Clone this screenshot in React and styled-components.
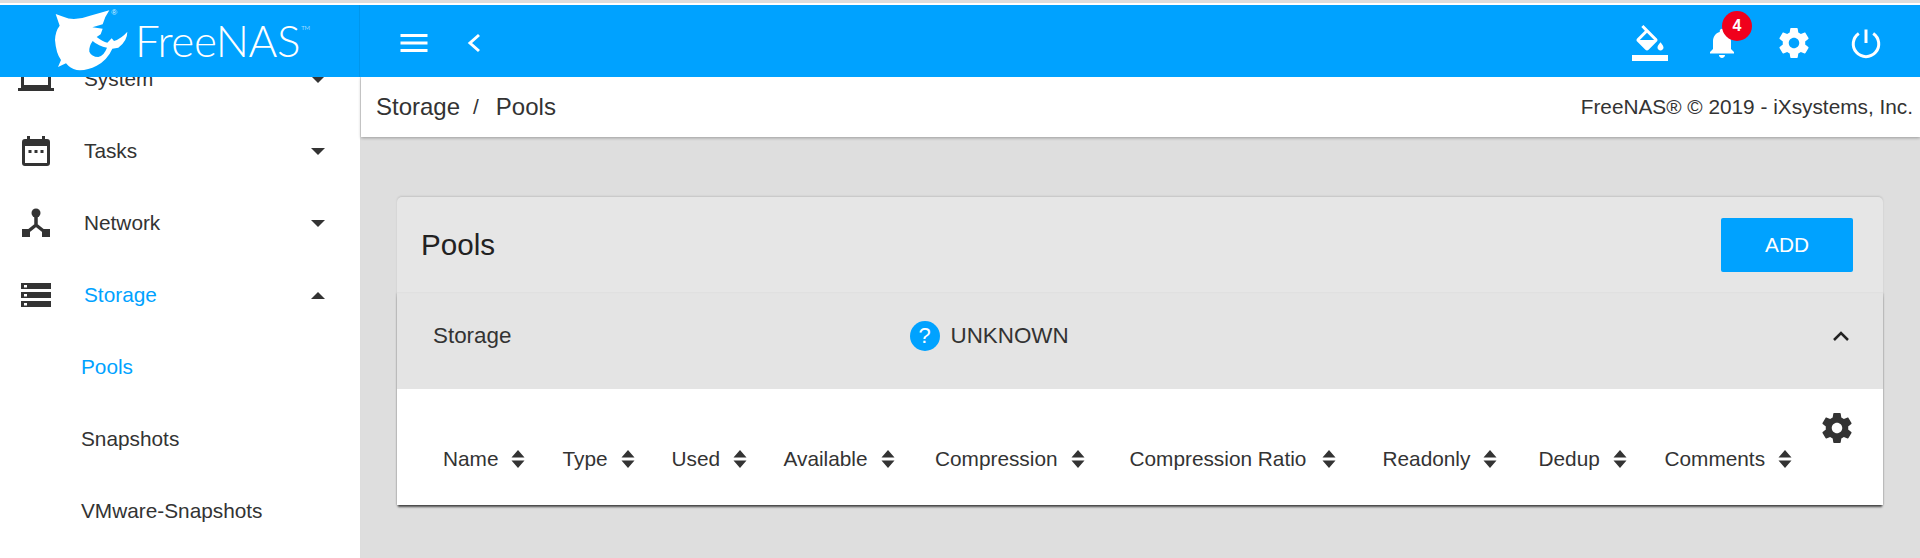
import React from "react";
import styled, { createGlobalStyle } from "styled-components";

const BLUE = "#00a2ff";
const INK = "#333333";

const GlobalStyle = createGlobalStyle`
  html, body {
    margin: 0;
    height: 100%;
    overflow: hidden;
    background: #ffffff;
    font-family: "Liberation Sans", Arial, sans-serif;
    color: ${INK};
  }
`;

const Page = styled.div`
  width: 1920px;
  height: 558px;
  display: flex;
  flex-direction: column;
  overflow: hidden;
`;

const BrowserEdge = styled.div`
  height: 3px;
  margin-bottom: 2px;
  background: #dddddd;
  flex: none;
`;

// Top bar
const TopBar = styled.header`
  height: 72px;
  flex: none;
  display: flex;
  align-items: stretch;
  background: ${BLUE};
  color: #fff;
  position: relative;
  z-index: 3;
`;

const Brand = styled.div`
  width: 360px;
  flex: none;
  display: flex;
  align-items: flex-start;
  padding-left: 50px;
  box-sizing: border-box;
  border-right: 1px solid #0096ec;
`;

const BrandName = styled.div`
  font-family: Lato, sans-serif;
  font-weight: 300;
  font-size: 44px;
  line-height: 50px;
  letter-spacing: -0.4px;
  margin: 10px 0 0 -5px;
  display: flex;
  align-items: flex-start;
`;

const Tm = styled.span`
  font-size: 6px;
  line-height: 10px;
  letter-spacing: 0;
  margin: 8px 0 0 1px;
`;

const BarActions = styled.div`
  flex: 1;
  display: flex;
  align-items: center;
  padding: 4px 36px 0 36px;
`;

const Spacer = styled.div`
  flex: 1;
`;

const BarIcon = styled.span`
  display: inline-flex;
  position: relative;
  width: ${(p) => p.$w}px;
  height: ${(p) => p.$h || p.$w}px;
  margin-left: ${(p) => p.$ml || 0}px;
  svg {
    display: block;
    width: 100%;
    height: 100%;
  }
`;

const Badge = styled.span`
  position: absolute;
  right: -12px;
  top: -14px;
  width: 30px;
  height: 30px;
  border-radius: 50%;
  background: #f0001c;
  color: #fff;
  font-size: 16px;
  font-weight: 700;
  display: flex;
  align-items: center;
  justify-content: center;
`;

// Sidebar + content
const Body = styled.div`
  flex: 1;
  display: flex;
  min-height: 0;
`;

const Sidebar = styled.nav`
  width: 361px;
  flex: none;
  box-sizing: border-box;
  overflow: hidden;
  background: #fff;
  border-right: 1px solid #dddddd;
`;

const NavList = styled.div`
  margin-top: -34px;
`;

const NavItem = styled.div`
  height: 72px;
  display: flex;
  align-items: center;
  font-size: 20.8px;
  color: ${(p) => (p.$active ? BLUE : INK)};
  padding-left: ${(p) => (p.$sub ? 81 : 18)}px;
`;

const NavIcon = styled.span`
  width: 36px;
  height: 36px;
  margin-right: 30px;
  flex: none;
  svg {
    display: block;
    width: 36px;
    height: 36px;
  }
`;

const NavLabel = styled.span`
  flex: 1;
`;

const Caret = styled.span`
  width: 0;
  height: 0;
  margin-right: 35px;
  border-left: 7px solid transparent;
  border-right: 7px solid transparent;
  border-top: ${(p) => (p.$up ? "0" : `7px solid ${INK}`)};
  border-bottom: ${(p) => (p.$up ? `7px solid ${INK}` : "0")};
`;

const Main = styled.main`
  flex: 1;
  min-width: 0;
  background: #dedede;
  display: flex;
  flex-direction: column;
`;

const Crumbs = styled.div`
  height: 60px;
  flex: none;
  box-sizing: border-box;
  padding: 0 7px 0 15px;
  display: flex;
  align-items: center;
  justify-content: space-between;
  background: #fff;
  box-shadow: 0 1px 3px rgba(0, 0, 0, 0.3);
  font-size: 24px;
  position: relative;
`;

const CrumbPath = styled.div`
  display: flex;
  align-items: center;
`;

const CrumbSep = styled.span`
  font-size: 20.8px;
  margin: 0 17px 0 13px;
`;

const Copyright = styled.div`
  font-size: 20.8px;
`;

const Content = styled.div`
  padding: 60px 37px 0 36px;
`;

const CardHead = styled.div`
  height: 96px;
  box-sizing: border-box;
  position: relative;
  z-index: 1;
  background: #e6e6e6;
  border-radius: 5px 5px 0 0;
  box-shadow: 0 -1px 2px rgba(0, 0, 0, 0.12);
  padding: 0 30px 0 24px;
  display: flex;
  align-items: center;
  justify-content: space-between;
  border-bottom: 1px solid #e0e0e0;
  font-size: 29.6px;
  color: #222;
`;

const AddButton = styled.button`
  width: 132px;
  height: 54px;
  border: 0;
  border-radius: 2px;
  background: ${BLUE};
  color: #fff;
  font: inherit;
  font-size: 20.8px;
  padding: 0;
`;

const Panel = styled.div`
  box-shadow: 0 3px 2px -1px rgba(0, 0, 0, 0.65), 0 0 2px rgba(0, 0, 0, 0.35);
`;

const PoolRow = styled.div`
  height: 96px;
  box-sizing: border-box;
  background: #e4e4e4;
  display: flex;
  align-items: center;
  padding: 0 34px 11px 36px;
  font-size: 22.4px;
`;

const PoolName = styled.div`
  width: 476.5px;
`;

const PoolStatus = styled.div`
  flex: 1;
  display: flex;
  align-items: center;
  gap: 11px;
`;

const StatusDot = styled.span`
  width: 30px;
  height: 30px;
  border-radius: 50%;
  background: ${BLUE};
  color: #fff;
  font-size: 22px;
  display: flex;
  align-items: center;
  justify-content: center;
`;

const Chevron = styled.svg`
  width: 16px;
  height: 10px;
  display: block;
`;

const TableArea = styled.div`
  height: 116px;
  box-sizing: border-box;
  background: #fff;
  padding: 0 30px 0 46px;
  display: flex;
`;

const HeadRow = styled.div`
  flex: 1;
  display: flex;
  align-items: center;
  height: 92px;
  align-self: flex-end;
`;

const HeadCell = styled.div`
  width: ${(p) => p.$w}px;
  flex: none;
  display: flex;
  align-items: center;
  font-size: 20.8px;
  color: ${INK};
  gap: ${(p) => p.$gap || 13}px;
`;

const SortIcon = styled.svg`
  width: 14px;
  height: 18px;
  display: block;
  flex: none;
`;

const TableGear = styled.svg`
  width: 36px;
  height: 36px;
  margin: 21px -2px 0 0;
  flex: none;
`;

const GEAR =
  "M19.43 12.98c.04-.32.07-.64.07-.98s-.03-.66-.07-.98l2.11-1.65c.19-.15.24-.42.12-.64l-2-3.46c-.12-.22-.39-.3-.61-.22l-2.49 1c-.52-.4-1.08-.73-1.69-.98l-.38-2.65C14.46 2.18 14.25 2 14 2h-4c-.25 0-.46.18-.49.42l-.38 2.65c-.61.25-1.17.59-1.69.98l-2.49-1c-.23-.09-.49 0-.61.22l-2 3.46c-.13.22-.07.49.12.64l2.11 1.65c-.04.32-.07.65-.07.98s.03.66.07.98l-2.11 1.65c-.19.15-.24.42-.12.64l2 3.46c.12.22.39.3.61.22l2.49-1c.52.4 1.08.73 1.69.98l.38 2.65c.03.24.24.42.49.42h4c.25 0 .46-.18.49-.42l.38-2.65c.61-.25 1.17-.59 1.69-.98l2.49 1c.23.09.49 0 .61-.22l2-3.46c.12-.22.07-.49-.12-.64l-2.11-1.65zM12 15.5c-1.93 0-3.5-1.57-3.5-3.5s1.57-3.5 3.5-3.5 3.5 1.57 3.5 3.5-1.57 3.5-3.5 3.5z";

const SharkLogo = () => (
  <svg width="90" height="70" viewBox="0 0 270 210" style={{ flex: "none" }}>
    <path
      fill="#fff"
      fillRule="evenodd"
      d="M17 27 L40 35 Q55 42 72 42 Q100 40 120 32 L178 16 Q165 34 158 58 L127 67 L158 71 L152 88 L140 96 Q158 110 172 113 L185 100 L192 108 Q215 100 232 80 Q232 108 205 128 L187 131 Q172 165 140 182 Q110 198 80 195 Q60 190 48 175 L24 186 L33 165 Q18 145 15 105 Q16 78 29 62 Z M128 108 Q116 125 118 140 Q124 155 145 156 Q162 152 171 128 Q146 124 128 108 Z"
    />
    <text x="184" y="31" fontSize="24" fill="#d5f0ff" fontFamily="Liberation Sans, sans-serif">®</text>
  </svg>
);

const columns = [
  { label: "Name", w: 119.5 },
  { label: "Type", w: 109 },
  { label: "Used", w: 112 },
  { label: "Available", w: 151.5 },
  { label: "Compression", w: 194.5 },
  { label: "Compression Ratio", w: 253, gap: 16 },
  { label: "Readonly", w: 156 },
  { label: "Dedup", w: 126 },
  { label: "Comments", w: 150 },
];

const Sort = () => (
  <SortIcon viewBox="0 0 14 18">
    <path fill={INK} d="M7 0 L13.5 7.5 H0.5 Z M0.5 10.5 H13.5 L7 18 Z" />
  </SortIcon>
);

const navIcon = {
  laptop: (
    <svg viewBox="0 0 36 36">
      <path fill={INK} d="M3 3 h30 v21 h-3 v-18 h-24 v18 h-3 z M3 24 h30 v3 h-30 z M0 27 h36 v3 h-36 z" />
    </svg>
  ),
  tasks: (
    <svg viewBox="0 0 36 36">
      <path
        fill={INK}
        fillRule="evenodd"
        d="M9 3 h3 v3 h12 v-3 h3 v3 h2 a3 3 0 0 1 3 3 v21 a3 3 0 0 1 -3 3 h-22 a3 3 0 0 1 -3 -3 v-21 a3 3 0 0 1 3 -3 h2 z M7 13 v17 h22 v-17 z"
      />
      <path fill={INK} d="M10.500 17 h3 v3 h-3 z M16.500 17 h3 v3 h-3 z M22.500 17 h3 v3 h-3 z" />
    </svg>
  ),
  network: (
    <svg viewBox="0 0 36 36">
      <circle cx="18" cy="8" r="4.500" fill={INK} />
      <path d="M18 10 V20 L8 28 M18 20 L28 28" stroke={INK} strokeWidth="3.500" fill="none" />
      <path fill={INK} d="M4 24 h8 v8 h-8 z M24 24 h8 v8 h-8 z" />
    </svg>
  ),
  storage: (
    <svg viewBox="0 0 36 36">
      <path
        fill={INK}
        fillRule="evenodd"
        d="M3 6 h30 v6 h-30 z M6 8 v2.500 h3 v-2.500 z M3 15 h30 v6 h-30 z M6 17 v2.500 h3 v-2.500 z M3 24 h30 v6 h-30 z M6 26 v2.500 h3 v-2.500 z"
      />
    </svg>
  ),
};

export default function App() {
  return (
    <Page>
      <GlobalStyle />
      <BrowserEdge />
      <TopBar>
        <Brand>
          <SharkLogo />
          <BrandName>
            FreeNAS<Tm>TM</Tm>
          </BrandName>
        </Brand>
        <BarActions>
          <BarIcon $w={36}>
            <svg viewBox="0 0 24 24" fill="#fff">
              <path d="M3 18h18v-2H3v2zm0-5h18v-2H3v2zm0-7v2h18V6H3z" />
            </svg>
          </BarIcon>
          <BarIcon $w={16} $h={20} $ml={34}>
            <svg viewBox="0 0 16 20" fill="none" stroke="#fff" strokeWidth="3">
              <path d="M13 2 L4 10 L13 18" />
            </svg>
          </BarIcon>
          <Spacer />
          <BarIcon $w={36}>
            <svg viewBox="0 0 24 24" fill="#fff">
              <path d="M16.56 8.94L7.62 0 6.21 1.41l2.38 2.38-5.15 5.15c-.59.59-.59 1.54 0 2.12l5.5 5.5c.29.29.68.44 1.06.44s.77-.15 1.06-.44l5.5-5.5c.59-.58.59-1.53 0-2.12zM5.21 10L10 5.21 14.79 10H5.21zM19 11.500s-2 2.170-2 3.500c0 1.100.9 2 2 2s2-.9 2-2c0-1.330-2-3.500-2-3.500z" />
              <path d="M0 20h24v4H0z" />
            </svg>
          </BarIcon>
          <BarIcon $w={36} $ml={36}>
            <svg viewBox="0 0 24 24" fill="#fff">
              <path d="M12 22c1.100 0 2-.9 2-2h-4c0 1.100.89 2 2 2zm6-6v-5c0-3.070-1.640-5.640-4.500-6.320V4c0-.83-.67-1.500-1.500-1.500s-1.500.67-1.500 1.500v.68C7.630 5.360 6 7.920 6 11v5l-2 2v1h16v-1l-2-2z" />
            </svg>
            <Badge>4</Badge>
          </BarIcon>
          <BarIcon $w={36} $ml={36}>
            <svg viewBox="0 0 24 24" fill="#fff">
              <path d={GEAR} />
            </svg>
          </BarIcon>
          <BarIcon $w={36} $ml={36}>
            <svg viewBox="0 0 24 24" fill="none" stroke="#fff" strokeWidth="2">
              <path d="M12 3v9" />
              <path d="M16.800 5.600a8.500 8.500 0 1 1-9.600 0" />
            </svg>
          </BarIcon>
        </BarActions>
      </TopBar>
      <Body>
        <Sidebar>
          <NavList>
            <NavItem>
              <NavIcon>{navIcon.laptop}</NavIcon>
              <NavLabel>System</NavLabel>
              <Caret />
            </NavItem>
            <NavItem>
              <NavIcon>{navIcon.tasks}</NavIcon>
              <NavLabel>Tasks</NavLabel>
              <Caret />
            </NavItem>
            <NavItem>
              <NavIcon>{navIcon.network}</NavIcon>
              <NavLabel>Network</NavLabel>
              <Caret />
            </NavItem>
            <NavItem $active>
              <NavIcon>{navIcon.storage}</NavIcon>
              <NavLabel>Storage</NavLabel>
              <Caret $up />
            </NavItem>
            <NavItem $sub $active>Pools</NavItem>
            <NavItem $sub>Snapshots</NavItem>
            <NavItem $sub>VMware-Snapshots</NavItem>
          </NavList>
        </Sidebar>
        <Main>
          <Crumbs>
            <CrumbPath>
              Storage<CrumbSep>/</CrumbSep>Pools
            </CrumbPath>
            <Copyright>FreeNAS® © 2019 - iXsystems, Inc.</Copyright>
          </Crumbs>
          <Content>
            <CardHead>
              Pools
              <AddButton>ADD</AddButton>
            </CardHead>
            <Panel>
              <PoolRow>
                <PoolName>Storage</PoolName>
                <PoolStatus>
                  <StatusDot>?</StatusDot>
                  UNKNOWN
                </PoolStatus>
                <Chevron viewBox="0 0 16 10" fill="none" stroke="#222" strokeWidth="2.500">
                  <path d="M1 9 L8 2 L15 9" />
                </Chevron>
              </PoolRow>
              <TableArea>
                <HeadRow>
                  {columns.map((c) => (
                    <HeadCell key={c.label} $w={c.w} $gap={c.gap}>
                      {c.label}
                      <Sort />
                    </HeadCell>
                  ))}
                </HeadRow>
                <TableGear viewBox="0 0 24 24" fill={INK}>
                  <path d={GEAR} />
                </TableGear>
              </TableArea>
            </Panel>
          </Content>
        </Main>
      </Body>
    </Page>
  );
}
